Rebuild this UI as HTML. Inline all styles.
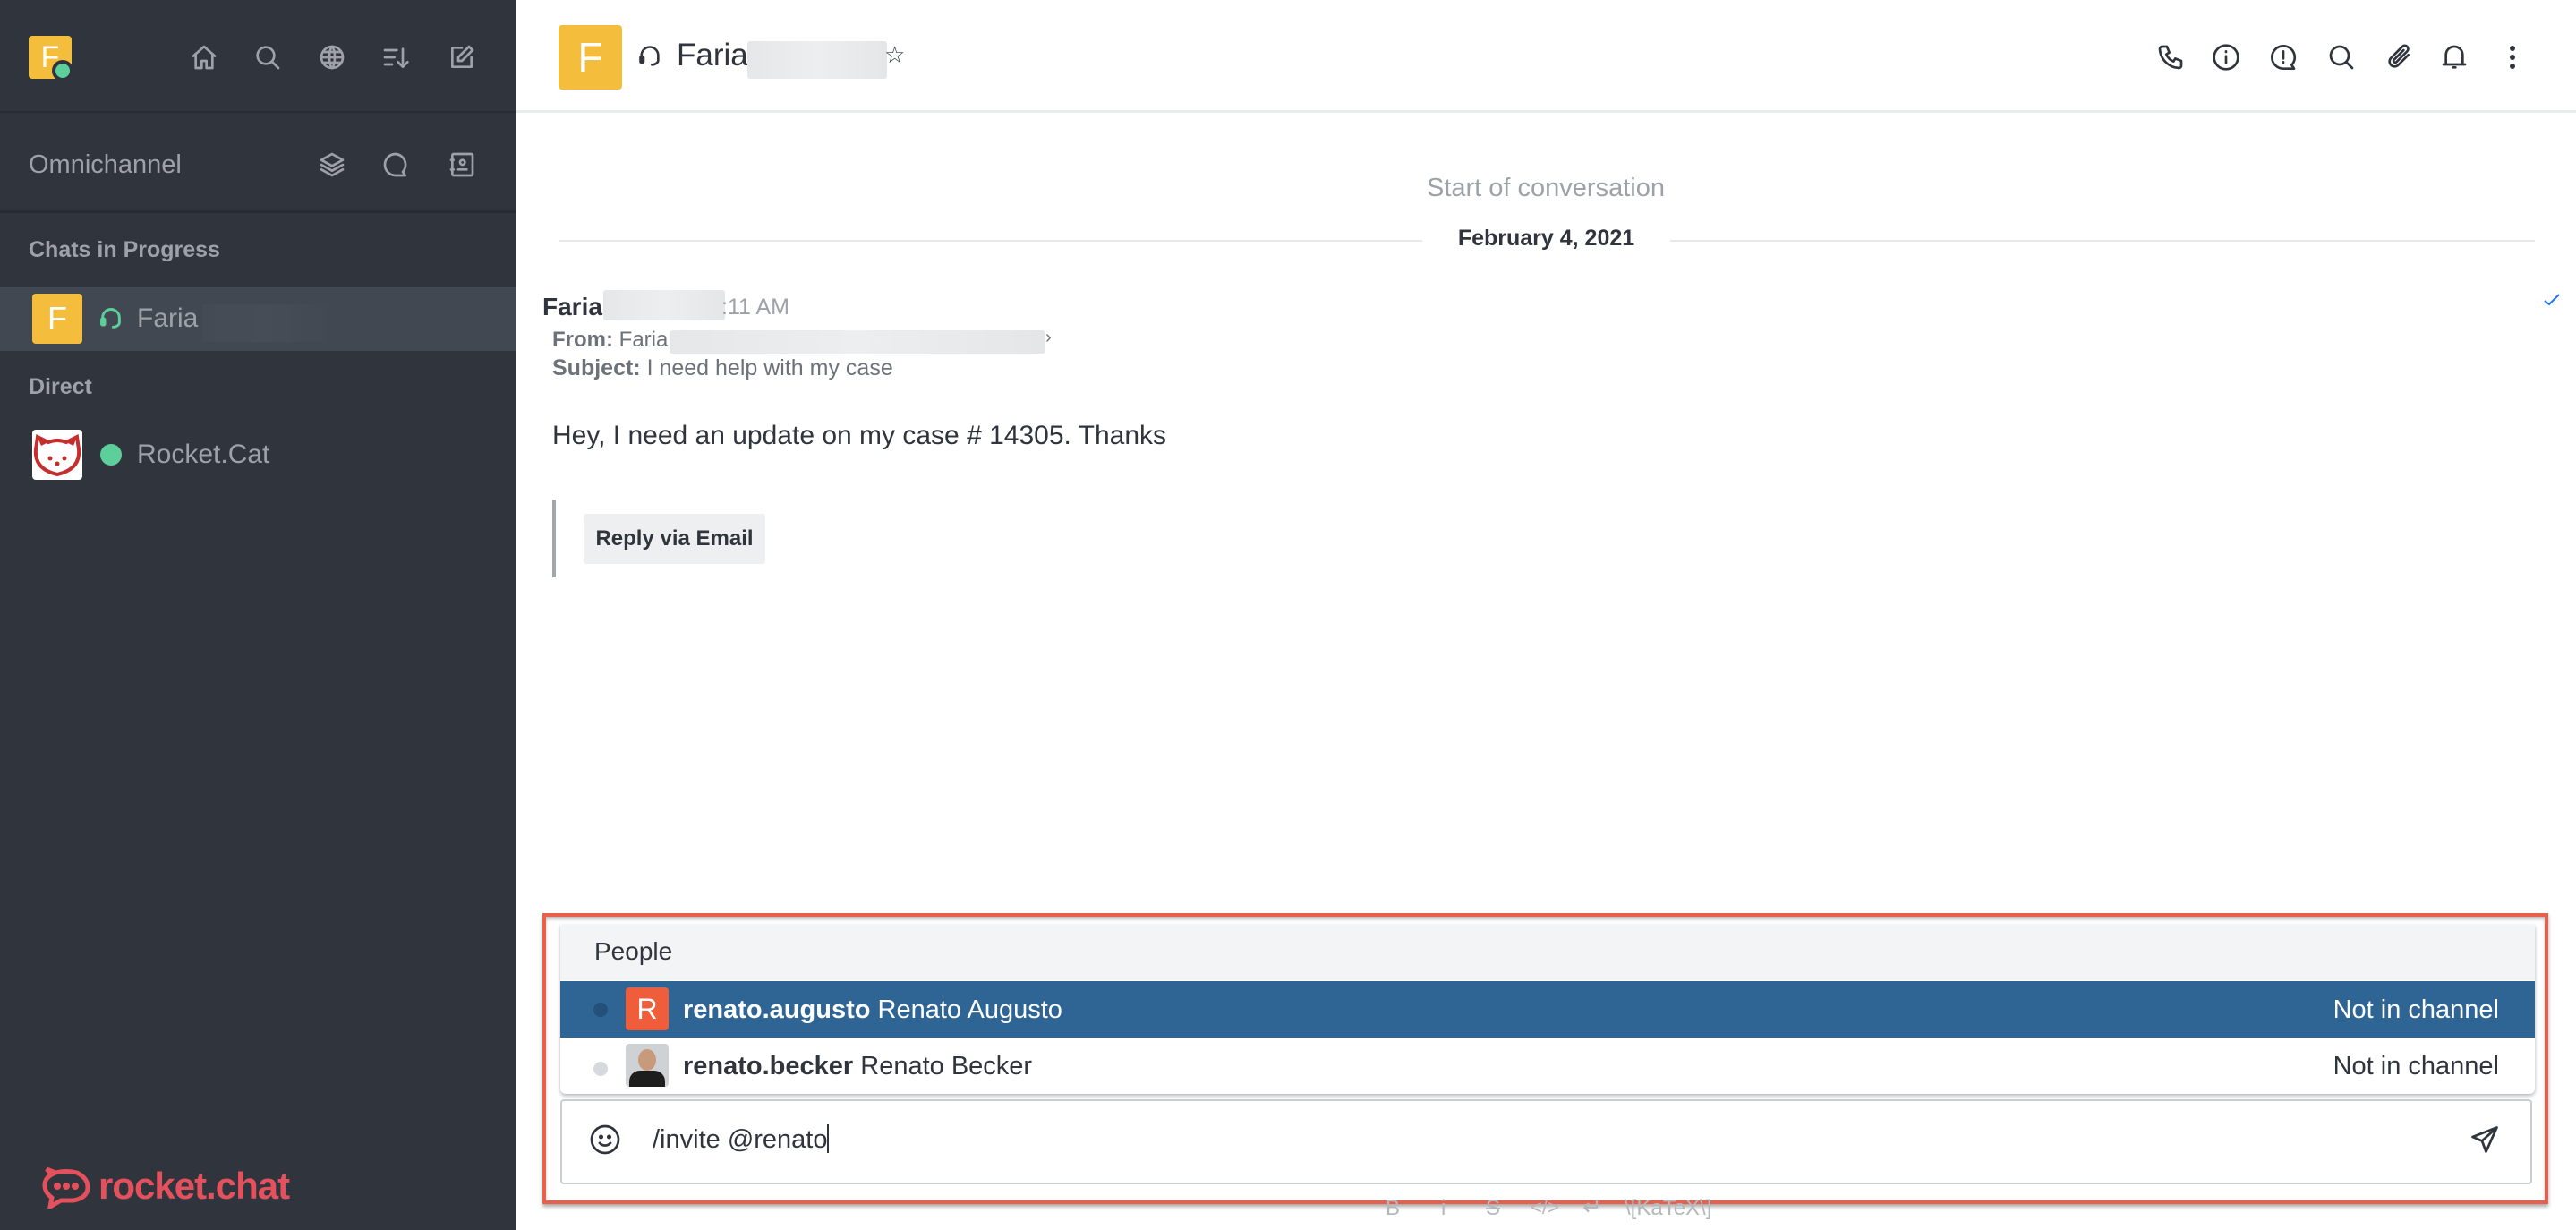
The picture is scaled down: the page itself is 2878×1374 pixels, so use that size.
<!DOCTYPE html>
<html><head><meta charset="utf-8">
<style>
*{box-sizing:border-box;margin:0;padding:0}
body{width:2878px;height:1374px;overflow:hidden;background:#fff;font-family:"Liberation Sans",sans-serif;position:relative}
.a{position:absolute}
.sb{left:0;top:0;width:576px;height:1374px;background:#2f343d}
.ic{position:absolute;width:32px;height:32px;fill:none;stroke:#9ea2a8;stroke-width:2;stroke-linecap:round;stroke-linejoin:round}
.mi{position:absolute;width:32px;height:32px;fill:none;stroke:#2f343d;stroke-width:2;stroke-linecap:round;stroke-linejoin:round}
.blur{position:absolute;background:linear-gradient(90deg,#e6e7e9,#eceef0,#e4e6e8);border-radius:3px}
.sblur{position:absolute;background:linear-gradient(90deg,#454b55,#474d57,#434953)}
</style></head><body>
<div class="a sb"></div>
<div class="a" style="left:32px;top:40px;width:48px;height:48px;background:#f5bd3c;border-radius:4px;color:#fff;font-size:34px;line-height:48px;text-align:center">F</div>
<div class="a" style="left:58px;top:67px;width:24px;height:24px;border-radius:50%;background:#2f343d"></div>
<div class="a" style="left:62px;top:71px;width:16px;height:16px;border-radius:50%;background:#5ccf9a"></div>
<svg class="ic" style="left:212px;top:48px" viewBox="0 0 24 24"><path d="M3 11L12 3l9 8M5 9v12h5v-6h4v6h5V9"/></svg>
<svg class="ic" style="left:283px;top:48px" viewBox="0 0 24 24"><circle cx="10.5" cy="10.5" r="7"/><path d="M15.5 15.5L21 21"/></svg>
<svg class="ic" style="left:355px;top:48px" viewBox="0 0 24 24"><circle cx="12" cy="12" r="9"/><path d="M3 12h18M12 3c3 3 3 15 0 18M12 3c-3 3-3 15 0 18M4.5 7.5h15M4.5 16.5h15"/></svg>
<svg class="ic" style="left:426px;top:48px" viewBox="0 0 24 24"><path d="M3 6h10M3 12h8M3 18h6M18 5v15M14 16l4 4 4-4"/></svg>
<svg class="ic" style="left:500px;top:48px" viewBox="0 0 24 24"><path d="M12 4H4v16h16v-8M18 3l3 3-9 9H9v-3z"/></svg>
<div class="a" style="left:0;top:124px;width:576px;height:2px;background:#272b32"></div>
<div class="a" style="left:32px;top:168px;color:#9ea2a8;font-size:29px">Omnichannel</div>
<svg class="ic" style="left:355px;top:168px" viewBox="0 0 24 24"><path d="M12 3l9 5-9 5-9-5zM3 12l9 5 9-5M3 16l9 5 9-5"/></svg>
<svg class="ic" style="left:426px;top:168px" viewBox="0 0 24 24"><path d="M12 3a9 9 0 1 0 0 18h8l-2-3a9 9 0 0 0-6-15z"/></svg>
<svg class="ic" style="left:500px;top:168px" viewBox="0 0 24 24"><rect x="4" y="3" width="17" height="18" rx="1"/><circle cx="12.5" cy="10" r="2"/><path d="M9 16h7M3 8h2M3 16h2"/></svg>
<div class="a" style="left:0;top:235px;width:576px;height:3px;background:#272b32"></div>
<div class="a" style="left:32px;top:265px;color:#9ea2a8;font-size:25px;font-weight:bold">Chats in Progress</div>
<div class="a" style="left:0;top:321px;width:576px;height:71px;background:#414852"></div>
<div class="a" style="left:36px;top:328px;width:56px;height:56px;background:#f5bd3c;border-radius:4px;color:#fff;font-size:36px;line-height:56px;text-align:center">F</div>
<svg class="a" style="left:110px;top:342px;width:28px;height:28px" viewBox="0 0 24 24" fill="none" stroke="#5ccf9a" stroke-width="2.5" stroke-linecap="round"><path d="M4 14v-3a8 8 0 0 1 16 0v3"/><rect x="3" y="12" width="3" height="6" rx="1" fill="#5ccf9a"/><path d="M20 14v2c0 2-3 4-6 4"/></svg>
<div class="a" style="left:153px;top:339px;color:#9ea2a8;font-size:30px">Faria</div>
<div class="sblur" style="left:226px;top:340px;width:140px;height:42px"></div>
<div class="a" style="left:32px;top:418px;color:#9ea2a8;font-size:25px;font-weight:bold">Direct</div>
<div class="a" style="left:36px;top:480px;width:56px;height:56px;background:#fff;border-radius:4px;overflow:hidden">
<svg width="56" height="56" viewBox="0 0 56 56"><path d="M4 22 L6 8 L18 14 Q28 10 38 14 L50 8 L52 22 Q54 44 28 50 Q2 44 4 22z" fill="none" stroke="#c62d2d" stroke-width="4"/><path d="M6 8 L18 14 L10 18z M50 8 L38 14 L46 18z" fill="#c62d2d"/><circle cx="20" cy="32" r="2.5" fill="#c62d2d"/><circle cx="36" cy="32" r="2.5" fill="#c62d2d"/><circle cx="28" cy="38" r="2.5" fill="#c62d2d"/></svg></div>
<div class="a" style="left:112px;top:496px;width:24px;height:24px;border-radius:50%;background:#5ccf9a"></div>
<div class="a" style="left:153px;top:491px;color:#9ea2a8;font-size:30px">Rocket.Cat</div>
<svg class="a" style="left:46px;top:1302px;width:56px;height:48px" viewBox="0 0 56 48" fill="none" stroke="#e4505c" stroke-width="5"><path d="M6 4 L16 8 Q28 5 40 8 Q52 14 52 24 Q52 36 36 39 L22 39 L10 46 L12 36 Q4 30 4 22 Q4 14 12 10 z"/><circle cx="18" cy="23" r="1.5" fill="#e4505c"/><circle cx="28" cy="23" r="1.5" fill="#e4505c"/><circle cx="38" cy="23" r="1.5" fill="#e4505c"/></svg>
<div class="a" style="left:110px;top:1301px;color:#e4505c;font-size:42px;font-weight:bold;letter-spacing:-1px">rocket.chat</div>

<div class="a" style="left:624px;top:28px;width:71px;height:72px;background:#f5bd3c;border-radius:4px;color:#fff;font-size:46px;line-height:72px;text-align:center">F</div>
<svg class="a" style="left:712px;top:48px;width:28px;height:30px" viewBox="0 0 24 24" fill="none" stroke="#2f343d" stroke-width="2.2" stroke-linecap="round"><path d="M4 14v-3a8 8 0 0 1 16 0v3"/><rect x="3" y="12" width="3" height="6" rx="1" fill="#2f343d"/><path d="M20 14v2c0 2-3 4-6 4"/></svg>
<div class="a" style="left:756px;top:42px;color:#2f343d;font-size:35px">Faria</div>
<div class="blur" style="left:835px;top:46px;width:156px;height:42px"></div>
<div class="a" style="left:988px;top:46px;color:#2f343d;font-size:26px">☆</div>
<svg class="mi" style="left:2409px;top:48px" viewBox="0 0 24 24"><path d="M5 3l4 0 2 5-2.5 1.5a11 11 0 0 0 6 6L16 13l5 2v4a2 2 0 0 1-2 2A17 17 0 0 1 3 5a2 2 0 0 1 2-2"/></svg>
<svg class="mi" style="left:2471px;top:48px" viewBox="0 0 24 24"><circle cx="12" cy="12" r="10"/><path d="M12 11v6M12 7v.5"/></svg>
<svg class="mi" style="left:2535px;top:48px" viewBox="0 0 24 24"><path d="M12 2.5a9.5 9.5 0 1 0 0 19h9l-2-3a9.5 9.5 0 0 0-7-16z"/><path d="M12 7v6M12 16v.5"/></svg>
<svg class="mi" style="left:2600px;top:48px" viewBox="0 0 24 24"><circle cx="10.5" cy="10.5" r="7.5"/><path d="M16 16l5 5"/></svg>
<svg class="mi" style="left:2664px;top:48px" viewBox="0 0 24 24"><path d="M20 10l-8.5 8.5a4 4 0 0 1-6-6L15 3a2.7 2.7 0 0 1 4 4l-9 9a1.3 1.3 0 0 1-2-2l8-8"/></svg>
<svg class="mi" style="left:2726px;top:48px" viewBox="0 0 24 24"><path d="M5 18V10a7 7 0 0 1 14 0v8zM3 18h18M11 20.5h2"/></svg>
<svg class="a" style="left:2795px;top:48px;width:24px;height:32px" viewBox="0 0 24 32" fill="#2f343d"><circle cx="12" cy="6" r="3"/><circle cx="12" cy="16" r="3"/><circle cx="12" cy="26" r="3"/></svg>
<div class="a" style="left:576px;top:123px;width:2302px;height:3px;background:#ebecef"></div>

<div class="a" style="left:576px;width:2302px;top:194px;text-align:center;color:#9ea2a8;font-size:29px">Start of conversation</div>
<div class="a" style="left:624px;top:268px;width:965px;height:2px;background:#e8e9ea"></div>
<div class="a" style="left:1866px;top:268px;width:966px;height:2px;background:#e8e9ea"></div>
<div class="a" style="left:1589px;width:277px;top:252px;text-align:center;color:#2f343d;font-size:25px;font-weight:bold">February 4, 2021</div>
<div class="a" style="left:606px;top:327px;color:#2f343d;font-size:28px;font-weight:bold">Faria</div>
<div class="blur" style="left:674px;top:324px;width:136px;height:34px"></div>
<div class="a" style="left:806px;top:329px;color:#9ea2a8;font-size:25px">:11 AM</div>
<div class="a" style="left:617px;top:366px;color:#6c727a;font-size:24px"><b>From:</b> Faria</div>
<div class="blur" style="left:748px;top:369px;width:420px;height:26px"></div>
<div class="a" style="left:1168px;top:366px;color:#6c727a;font-size:20px">›</div>
<div class="a" style="left:617px;top:397px;color:#6c727a;font-size:25px"><b>Subject:</b> I need help with my case</div>
<div class="a" style="left:617px;top:470px;color:#2f343d;font-size:30px">Hey, I need an update on my case # 14305. Thanks</div>
<svg class="a" style="left:2840px;top:326px;width:22px;height:18px" viewBox="0 0 22 18" fill="none" stroke="#1d74f5" stroke-width="2"><path d="M3 10l5 4 11-11"/></svg>
<div class="a" style="left:617px;top:558px;width:4px;height:87px;background:#a2a7ae"></div>
<div class="a" style="left:652px;top:574px;width:203px;height:56px;background:#eeeff1;border-radius:3px;color:#2f343d;font-size:24px;font-weight:bold;line-height:56px;text-align:center">Reply via Email</div>

<div class="a" style="left:606px;top:1020px;width:2241px;height:325px;border:4px solid #e8604c;box-shadow:0 3px 4px rgba(0,0,0,.35), inset 0 3px 3px rgba(0,0,0,.25)"></div>
<div class="a" style="left:626px;top:1033px;width:2206px;height:189px;background:#fff;border-radius:0 0 6px 6px;box-shadow:0 2px 4px rgba(0,0,0,.3);overflow:hidden">
 <div class="a" style="left:0;top:0;width:2206px;height:62px;background:#f3f4f5"></div>
 <div class="a" style="left:38px;top:14px;color:#2f343d;font-size:28px">People</div>
 <div class="a" style="left:0;top:63px;width:2206px;height:63px;background:#2e6594"></div>
 <div class="a" style="left:37px;top:87px;width:16px;height:16px;border-radius:50%;background:#24507a"></div>
 <div class="a" style="left:73px;top:70px;width:48px;height:48px;border-radius:4px;background:#f05d3a;color:#fff;font-size:32px;line-height:48px;text-align:center">R</div>
 <div class="a" style="left:137px;top:79px;color:#fff;font-size:29px"><b>renato.augusto</b> Renato Augusto</div>
 <div class="a" style="right:40px;top:79px;color:#fff;font-size:29px">Not in channel</div>
 <div class="a" style="left:37px;top:153px;width:16px;height:16px;border-radius:50%;background:#d6d9dd"></div>
 <div class="a" style="left:73px;top:133px;width:48px;height:48px;border-radius:4px;background:#cfd2d5;overflow:hidden"><div style="position:absolute;left:14px;top:6px;width:20px;height:24px;border-radius:50%;background:#c89a7c"></div><div style="position:absolute;left:4px;top:30px;width:40px;height:24px;border-radius:12px 12px 0 0;background:#1d1d1d"></div></div>
 <div class="a" style="left:137px;top:142px;color:#2f343d;font-size:29px"><b>renato.becker</b> Renato Becker</div>
 <div class="a" style="right:40px;top:142px;color:#2f343d;font-size:29px">Not in channel</div>
</div>
<div class="a" style="left:626px;top:1228px;width:2203px;height:95px;background:#fff;border:2px solid #cbced1;border-radius:4px"></div>
<svg class="a" style="left:658px;top:1255px;width:36px;height:36px" viewBox="0 0 24 24" fill="none" stroke="#2f343d" stroke-width="1.8"><circle cx="12" cy="12" r="10"/><path d="M8 14.5c2 2.5 6 2.5 8 0" stroke-linecap="round"/><circle cx="9" cy="10" r=".8" fill="#2f343d"/><circle cx="15" cy="10" r=".8" fill="#2f343d"/></svg>
<div class="a" style="left:729px;top:1256px;color:#2f343d;font-size:29px">/invite @renato<span style="display:inline-block;width:2px;height:32px;background:#2f343d;vertical-align:-6px"></span></div>
<svg class="a" style="left:2757px;top:1255px;width:38px;height:36px" viewBox="0 0 24 24" fill="none" stroke="#2f343d" stroke-width="1.8" stroke-linejoin="round"><path d="M21 3L3 10l7 3 3 8z M10 13l11-10"/></svg>
<div class="a" style="left:1548px;top:1336px;color:#b4b8bd;font-size:24px">B</div>
<div class="a" style="left:1610px;top:1336px;color:#b4b8bd;font-size:24px">i</div>
<div class="a" style="left:1660px;top:1336px;color:#b4b8bd;font-size:24px;text-decoration:line-through">S</div>
<div class="a" style="left:1710px;top:1336px;color:#b4b8bd;font-size:22px">&lt;/&gt;</div>
<div class="a" style="left:1768px;top:1333px;color:#b4b8bd;font-size:26px">↵</div>
<div class="a" style="left:1815px;top:1336px;color:#b4b8bd;font-size:24px">\[KaTeX\]</div>
</body></html>
